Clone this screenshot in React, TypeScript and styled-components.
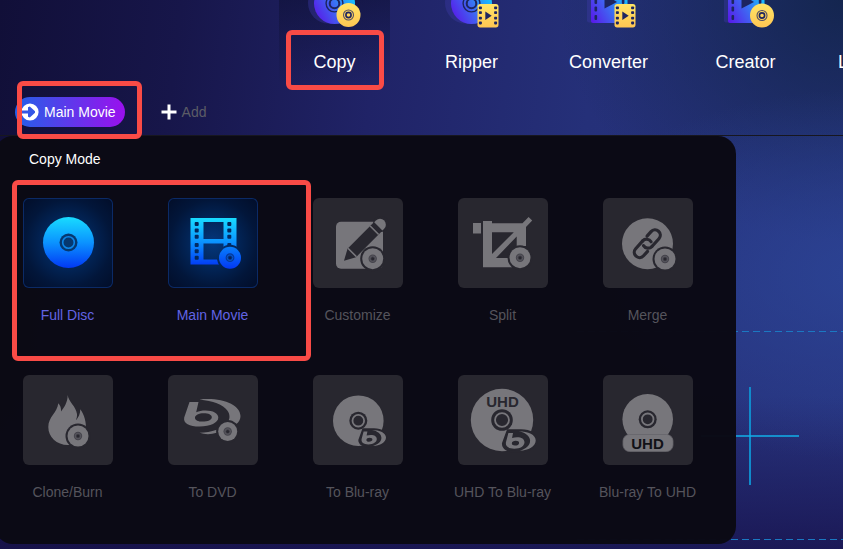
import React from "react";
import styled, { createGlobalStyle } from "styled-components";

const GlobalStyle = createGlobalStyle`
  *, *::before, *::after { box-sizing: border-box; }
  body {
    margin: 0;
    background: #161345;
    color: #fff;
    font-family: "Liberation Sans", Arial, sans-serif;
    font-size: 14px;
    line-height: 18px;
  }
`;

const Page = styled.div`
  display: flex;
  flex-direction: column;
  min-height: 100vh;
  overflow: hidden;
  background:
    radial-gradient(ellipse 40% 34% at 104% 50%, rgba(44, 70, 152, 0.8), transparent),
    radial-gradient(ellipse 34% 44% at 100% 0%, rgba(18, 36, 74, 0.9), transparent),
    linear-gradient(transparent 72%, rgba(24, 18, 76, 0.8) 100%),
    linear-gradient(97deg, #110f38 0%, #17164a 20%, #202367 42%, #253079 66%, #283580 100%);
`;

const Header = styled.header`
  position: relative;
  height: 90px;
`;

const Nav = styled.nav`
  display: flex;
  gap: 26px;
  padding-left: 279px;
`;

const Tab = styled.button<{ $active?: boolean }>`
  position: relative;
  flex: none;
  display: flex;
  flex-direction: column;
  align-items: center;
  gap: 22px;
  width: 111px;
  height: 84px;
  padding: 0;
  border: 0;
  background: ${(p) =>
    p.$active ? "linear-gradient(rgba(12, 14, 48, 0.5), rgba(12, 14, 48, 0))" : "transparent"};
  color: #fff;
  font: inherit;
  font-size: 18px;
  line-height: 24px;
`;

const TabSpill = styled(Tab)`
  align-items: flex-start;
  padding: 50px 0 0 11px;
`;

const Toolbar = styled.div`
  position: relative;
  z-index: 2;
  display: flex;
  align-items: center;
  gap: 36px;
  height: 46px;
  padding: 0 15px 2px;
  border-bottom: 1px solid #17171f;
`;

const Pill = styled.button`
  display: flex;
  align-items: center;
  gap: 5px;
  height: 30px;
  padding: 0 9px 0 5px;
  border: 0;
  border-radius: 15px;
  background: linear-gradient(90deg, #2360e8, #9a10ee);
  color: #fff;
  font: inherit;
`;

const AddButton = styled.button`
  display: flex;
  align-items: center;
  gap: 5px;
  padding: 0;
  border: 0;
  background: none;
  color: #5c5c66;
  font: inherit;
`;

const Stage = styled.main`
  flex: 1;
  display: grid;
  grid-template-columns: minmax(0, 1fr);
`;

const DropZone = styled.div`
  grid-area: 1 / 1;
  display: flex;
  flex-direction: column;
  justify-content: space-between;
  align-items: center;
  width: 346px;
  height: 209px;
  margin: 195px 0 0 577px;
`;

const Dashes = styled.div`
  width: 100%;
  height: 1px;
  background: repeating-linear-gradient(90deg, #1b78c2 0 7px, transparent 7px 11px);
`;

const Panel = styled.section`
  position: relative;
  z-index: 1;
  grid-area: 1 / 1;
  justify-self: start;
  align-self: start;
  width: 741px;
  margin-left: -5px;
  padding: 14px 0 43px;
  border-radius: 18px;
  background: rgba(11, 10, 20, 0.99);
`;

const PanelTitle = styled.h2`
  margin: 0 0 30px 34px;
  font-size: 14px;
  font-weight: 400;
  line-height: 18px;
`;

const Grid = styled.div`
  display: grid;
  grid-template-columns: repeat(5, 145px);
  row-gap: 51px;
`;

const Mode = styled.button<{ $on?: boolean }>`
  display: flex;
  flex-direction: column;
  align-items: center;
  gap: 18px;
  padding: 0;
  border: 0;
  background: none;
  color: ${(p) => (p.$on ? "#6264e4" : "#55545c")};
  font: inherit;
  white-space: nowrap;
`;

const Tile = styled.span<{ $on?: boolean }>`
  display: block;
  width: 90px;
  height: 90px;
  border-radius: 6px;
  overflow: hidden;
  background: ${(p) =>
    p.$on ? "radial-gradient(circle, #04377c 0%, #022558 38%, #02163a 68%, #020d28 100%)" : "#28272f"};
  box-shadow: ${(p) => (p.$on ? "inset 0 0 0 1px #0b2a66" : "none")};

  svg { display: block; }
`;

const Marker = styled.div<{ $x: number; $y: number; $w: number; $h: number }>`
  position: absolute;
  left: ${(p) => p.$x}px;
  top: ${(p) => p.$y}px;
  width: ${(p) => p.$w}px;
  height: ${(p) => p.$h}px;
  border: 5px solid #f94b46;
  border-radius: 6px;
  pointer-events: none;
`;

const CUT = "#28272f";
const FG = "#77767b";
const INK = "#1d2560";

const MiniDisc = ({ x, y, r = 10.5 }: { x: number; y: number; r?: number }) => (
  <g>
    <circle cx={x} cy={y} r={r + 2} fill={CUT} />
    <circle cx={x} cy={y} r={r} fill={FG} />
    <circle cx={x} cy={y} r={4.2} fill="#45444c" />
    <circle cx={x} cy={y} r={2.8} fill="none" stroke="#5c5b62" strokeWidth={0.8} />
    <circle cx={x} cy={y} r={1.5} fill={CUT} />
  </g>
);

const Disc = ({ x, y, r, k = 1 }: { x: number; y: number; r: number; k?: number }) => (
  <g>
    <circle cx={x} cy={y} r={r} fill={FG} />
    <circle cx={x} cy={y} r={9 * k} fill={CUT} />
    <circle cx={x} cy={y} r={5.8 * k} fill="none" stroke={FG} strokeWidth={1.8} />
  </g>
);

/* Blu-ray style mark, 26 x 17 units */
const BluMark = () => (
  <g>
    <path
      d="M3 0H14C22 0 27 4 27 8.5C27 14 20 18 10 18C3 18-1 15-1 11Z"
      fill={CUT}
      stroke={CUT}
      strokeWidth="1.4"
    />
    <path
      fill={FG}
      fillRule="evenodd"
      d="M3.6 2.4H7.4L6.6 6.6C8 6.2 9.4 6 10.8 6C14.4 6 16.8 7.5 16.8 10.1C16.8 13.2 13.4 15.4 8.4 15.4C3.6 15.4 1 13.4 1.6 10ZM9.6 8.8C7.8 8.8 6.4 9.6 6.4 10.9C6.4 12.1 7.4 12.7 8.9 12.7C11 12.7 12.4 11.9 12.4 10.6C12.4 9.5 11.4 8.8 9.6 8.8Z"
    />
    <path fill={FG} d="M12 1C20 1 26 4 26 8.6C26 13.4 20 16.8 13 17C18 15.6 21.4 12.6 21.4 8.8C21.4 5 17.4 2 12 1Z" />
  </g>
);

const FullDiscArt = () => (
  <>
    <defs>
      <linearGradient id="discBlue" x1="0" y1="0" x2="0" y2="1">
        <stop offset="0" stopColor="#18dcff" />
        <stop offset=".5" stopColor="#0b93ff" />
        <stop offset="1" stopColor="#0238f4" />
      </linearGradient>
    </defs>
    <circle cx="45.5" cy="44.5" r="25.5" fill="url(#discBlue)" />
    <circle cx="45.5" cy="44.5" r="9" fill="#06386f" />
    <circle cx="45.5" cy="44.5" r="5.8" fill="none" stroke="#0c86e8" strokeWidth="1.6" />
  </>
);

const FilmArt = () => (
  <>
    <defs>
      <linearGradient id="filmBlue" x1="0" y1="20" x2="0" y2="68" gradientUnits="userSpaceOnUse">
        <stop offset="0" stopColor="#18dcff" />
        <stop offset=".5" stopColor="#0b93ff" />
        <stop offset="1" stopColor="#0238f4" />
      </linearGradient>
      <mask id="filmMask">
        <rect width="90" height="90" fill="#fff" />
        <rect x="35.5" y="24" width="20" height="17" fill="#000" />
        <rect x="35.5" y="45.5" width="20" height="16" fill="#000" />
        {[26, 32.5, 38.7, 47, 53.3, 59.7].map((y) => (
          <g key={y} fill="#000">
            <rect x="26.7" y={y - 2} width="4" height="4" rx="1" />
            <rect x="59.3" y={y - 2} width="4" height="4" rx="1" />
          </g>
        ))}
        <circle cx="62" cy="59.7" r="13" fill="#000" />
      </mask>
      <linearGradient id="filmDisc" x1="0" y1="0" x2="0" y2="1">
        <stop offset="0" stopColor="#087ffc" />
        <stop offset="1" stopColor="#0338f4" />
      </linearGradient>
    </defs>
    <path d="M22.5 20H68.5V66.5H22.5Z" fill="url(#filmBlue)" mask="url(#filmMask)" />
    <circle cx="62" cy="59.7" r="11" fill="url(#filmDisc)" />
    <circle cx="62" cy="59.7" r="4.4" fill="#053a9c" />
    <circle cx="62" cy="59.7" r="2.8" fill="none" stroke="#0a5fd8" strokeWidth=".8" />
    <circle cx="62" cy="59.7" r="1.5" fill="#03245c" />
  </>
);

const CustomizeArt = () => (
  <>
    <rect x="23" y="23.7" width="47" height="47" rx="5" fill={FG} />
    <circle cx="68" cy="26" r="8" fill={CUT} />
    <g transform="translate(31 62.7) rotate(-45)">
      <path d="M0 0L11-6H56V6H11Z" fill={CUT} />
      <path d="M11.6-6V6M43-6V6" stroke={FG} strokeWidth="1.6" />
      <path d="M48.5-5.8H51A5.8 5.8 0 0 1 51 5.8H48.5Z" fill={FG} />
    </g>
    <MiniDisc x={59.7} y={60.7} />
  </>
);

const SplitArt = () => (
  <>
    <path
      fill={FG}
      fillRule="evenodd"
      d="M15 25H23V35.5H15ZM25 23H34V25.3H64.5L70.6 19L74.2 22.6L68 29V48H58.7V38.5L38 60H54V69.3H25ZM34 34.3V56L55.8 34.3Z"
    />
    <MiniDisc x={62} y={59.7} />
  </>
);

const MergeArt = () => (
  <>
    <circle cx="44.5" cy="45.7" r="25.5" fill={FG} />
    <g transform="translate(44.3 45.7) rotate(-48)" fill="none" stroke={CUT} strokeWidth="3.2" strokeLinecap="round">
      <path d="M-1-5.3H-11.5A5.3 5.3 0 0 0-11.5 5.3H-5.5" />
      <path d="M-1-5.3A5.3 5.3 0 0 1 4 1.5" />
      <path d="M1 5.3H11.5A5.3 5.3 0 0 0 11.5-5.3H5.5" />
      <path d="M1 5.3A5.3 5.3 0 0 1-4-1.5" />
    </g>
    <MiniDisc x={62} y={61} />
  </>
);

const BurnArt = () => (
  <>
    <path
      fill={FG}
      d="M44.7 20C45.5 27 53 31 54 39C54.3 41.5 53.5 43.5 52.8 45.5C55.5 42.5 57.3 39 57.3 34.3C61 39 63.8 48 62.8 56C61.5 65 54 70 45 70C33.5 70 25.3 62 25.3 52C25.3 42 34 38 35.3 28.3C37.3 30.5 38.3 33 38 36.5C41.5 32 44.7 27 44.7 20Z"
    />
    <MiniDisc x={55} y={61} />
  </>
);

const DvdArt = () => (
  <>
    <path
      fill={FG}
      fillRule="evenodd"
      d="M21.5 27H30.5L28.2 37.2C31 36.3 34 35.6 37.5 35.6C45 35.6 50.3 38.4 50.3 42.6C50.3 47.8 42.5 51.5 31.5 51.5C21.5 51.5 15 48.5 16.2 42.4ZM35.8 38.2C30.7 38.2 27 40 27 42.7C27 45.2 30.2 46.6 34.4 46.6C40 46.6 43.8 44.9 43.8 42.2C43.8 39.7 40.4 38.2 35.8 38.2Z"
    />
    <path fill={FG} d="M31.5 24.5C54 22 72.5 30 72.5 41C72.5 44 71.2 46.8 68.5 49L60 46.5C62.3 43.6 61.8 39 59.5 35.8C55 29.5 45 26 31.5 24.5Z" />
    <path fill={FG} d="M31.5 57.8C37.5 57.7 43 56.6 48.7 54.8V57.8C43 59.6 37 59.7 31.5 57.8Z" />
    <MiniDisc x={59.7} y={56.5} r={9.5} />
  </>
);

const BluArt = () => (
  <>
    <Disc x={45.3} y={45.7} r={25.3} />
    <g transform="translate(47 54)">
      <BluMark />
    </g>
  </>
);

const UhdText = ({ y, fill }: { y: number; fill: string }) => (
  <text x="44.5" y={y} textAnchor="middle" fontFamily="Liberation Sans, Arial, sans-serif" fontSize="15" fontWeight="700" fill={fill}>
    UHD
  </text>
);

const UhdBluArt = () => (
  <>
    <Disc x={44} y={45} r={31.2} k={1.2} />
    <UhdText y={32} fill={CUT} />
    <g transform="translate(46 55) scale(1.22)">
      <BluMark />
    </g>
  </>
);

const BluUhdArt = () => (
  <>
    <Disc x={44.7} y={44.3} r={25.3} />
    <rect x="20" y="59.5" width="50" height="17" rx="6.5" fill={FG} stroke="#66656b" strokeWidth=".8" />
    <UhdText y={73.5} fill="#111116" />
  </>
);

const modes: { label: string; on?: boolean; Art: () => React.JSX.Element }[] = [
  { label: "Full Disc", on: true, Art: FullDiscArt },
  { label: "Main Movie", on: true, Art: FilmArt },
  { label: "Customize", Art: CustomizeArt },
  { label: "Split", Art: SplitArt },
  { label: "Merge", Art: MergeArt },
  { label: "Clone/Burn", Art: BurnArt },
  { label: "To DVD", Art: DvdArt },
  { label: "To Blu-ray", Art: BluArt },
  { label: "UHD To Blu-ray", Art: UhdBluArt },
  { label: "Blu-ray To UHD", Art: BluUhdArt },
];

const TabIcon = ({ base, badge }: { base: "disc" | "film"; badge: "disc" | "film" }) => (
  <svg width="60" height="28" viewBox="0 0 60 28" aria-hidden="true">
    <defs>
      <linearGradient id="tabBase" x1="10" y1="20" x2="50" y2="-2" gradientUnits="userSpaceOnUse">
        <stop offset="0" stopColor="#5a14e8" />
        <stop offset=".5" stopColor="#3f66f2" />
        <stop offset="1" stopColor="#12c8ff" />
      </linearGradient>
      <linearGradient id="tabBadge" x1="0" y1="0" x2="0" y2="1">
        <stop offset="0" stopColor="#ffe566" />
        <stop offset="1" stopColor="#ffc653" />
      </linearGradient>
    </defs>
    {base === "disc" ? (
      <>
        <circle cx="23.5" cy="3" r="20.5" fill="#3d3aa8" opacity=".4" />
        <circle cx="29.5" cy="3.5" r="20.5" fill="url(#tabBase)" />
        <circle cx="29.5" cy="3.5" r="8.4" fill="none" stroke={INK} strokeWidth="1.4" />
        <circle cx="29.5" cy="3.5" r="4.8" fill="none" stroke={INK} strokeWidth="2" />
      </>
    ) : (
      <>
        <rect x="8" y="-10" width="36" height="32.5" rx="2" fill="#3d3aa8" opacity=".4" />
        <rect x="12" y="-10" width="36.5" height="33" rx="2" fill="url(#tabBase)" />
        <path d="M25.5-6V8.5L38 2Z" fill={INK} />
        {[0, 7.5, 16].map((y) => (
          <g key={y} fill={INK}>
            <rect x="15.5" y={y - 1} width="2.6" height="5" rx="1" />
            <rect x="42.8" y={y - 1} width="2.6" height="5" rx="1" />
          </g>
        ))}
      </>
    )}
    {badge === "disc" ? (
      <g transform={base === "disc" ? "translate(43.5 15)" : "translate(46 15.5)"}>
        <circle r="12" fill="url(#tabBadge)" />
        <circle r="5" fill="none" stroke="#575064" strokeWidth="1.1" />
        <circle r="2.6" fill="none" stroke={INK} strokeWidth="1.6" />
      </g>
    ) : (
      <g transform="translate(35.5 4)">
        <rect width="21" height="23.4" rx="2.6" fill="url(#tabBadge)" />
        {[2.5, 7.3, 12.7, 17.6].map((y) => (
          <g key={y} fill={INK}>
            <rect x="1.4" y={y} width="3" height="2.8" rx=".8" />
            <rect x="16.6" y={y} width="3" height="2.8" rx=".8" />
          </g>
        ))}
        <path d="M7.8 7.5L14.2 11.7L7.8 15.9Z" fill={INK} />
      </g>
    )}
  </svg>
);

export default function App() {
  return (
    <Page>
      <GlobalStyle />
      <Header>
        <Nav>
          <Tab $active>
            <TabIcon base="disc" badge="disc" />
            Copy
          </Tab>
          <Tab>
            <TabIcon base="disc" badge="film" />
            Ripper
          </Tab>
          <Tab>
            <TabIcon base="film" badge="film" />
            Converter
          </Tab>
          <Tab>
            <TabIcon base="film" badge="disc" />
            Creator
          </Tab>
          <TabSpill>L</TabSpill>
        </Nav>
        <Marker $x={286} $y={30} $w={98} $h={60} />
      </Header>

      <Toolbar>
        <Pill>
          <svg width="19" height="18" viewBox="0 0 19 18" aria-hidden="true">
            <circle cx="10" cy="9" r="8.6" fill="#fff" />
            <path d="M0 7.4H8V4.2L9.8 3.6L15 8.2V9.8L9.8 14.4L8 13.8V10.6H0Z" fill="#3556e6" />
          </svg>
          Main Movie
        </Pill>
        <AddButton>
          <svg width="16" height="16" viewBox="0 0 16 16" aria-hidden="true">
            <path d="M8 .5V15.5M.5 8H15.5" stroke="#fff" strokeWidth="3" />
          </svg>
          Add
        </AddButton>
        <Marker $x={17} $y={-9} $w={125} $h={58} />
      </Toolbar>

      <Stage>
        <DropZone>
          <Dashes />
          <svg width="98" height="98" viewBox="0 0 98 98" aria-hidden="true">
            <path d="M49 0V98" stroke="#108acb" strokeWidth="2" />
            <path d="M0 49H98" stroke="#12b0ea" strokeWidth="1.4" />
          </svg>
          <Dashes />
        </DropZone>
        <Panel>
          <PanelTitle>Copy Mode</PanelTitle>
          <Grid>
            {modes.map(({ label, on, Art }) => (
              <Mode key={label} $on={on}>
                <Tile $on={on}>
                  <svg width="90" height="90" viewBox="0 0 90 90" aria-hidden="true">
                    <Art />
                  </svg>
                </Tile>
                {label}
              </Mode>
            ))}
          </Grid>
          <Marker $x={17} $y={44} $w={299} $h={181} />
        </Panel>
      </Stage>
    </Page>
  );
}
